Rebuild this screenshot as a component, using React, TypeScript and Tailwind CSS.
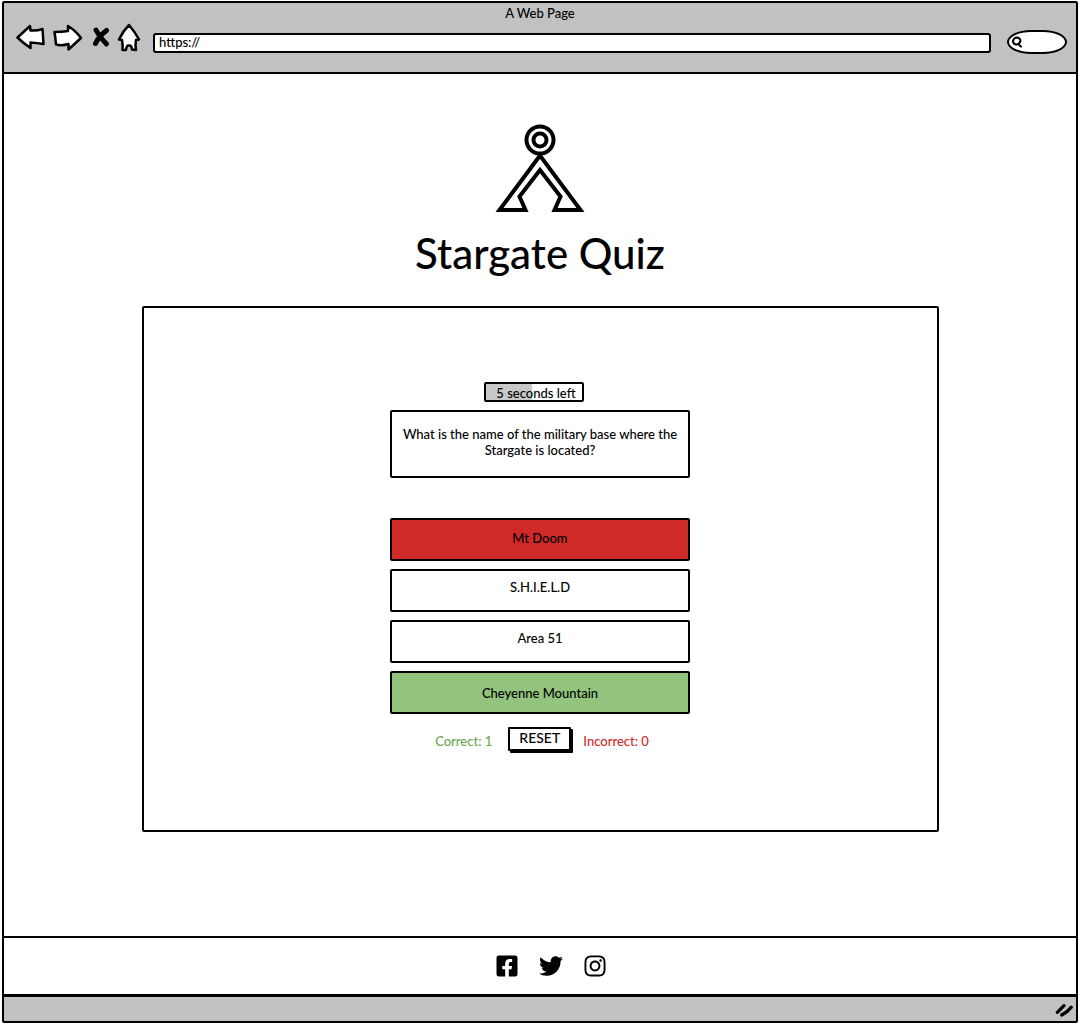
import { FaFacebookSquare, FaTwitter, FaInstagram } from "react-icons/fa";

const answers = [
  { label: "Mt Doom", tone: "bg-[#cf2a28] pb-1" },
  { label: "S.H.I.E.L.D", tone: "bg-white pb-2" },
  { label: "Area 51", tone: "bg-white pb-2" },
  { label: "Cheyenne Mountain", tone: "bg-[#93c47d]" },
];

function BrowserBar() {
  return (
    <header className="flex h-[71px] flex-col border-b-2 border-black bg-[#c1c1c1]">
      <p className="mt-0.5 text-center text-[13px] leading-4">A Web Page</p>
      <div className="flex items-start pl-[11px] pr-[9px]">
        <nav aria-label="Browser" className="flex">
          <button aria-label="Back" className="h-8 w-[30px]">
            <svg viewBox="0 0 30 32" className="h-8 w-[30px] fill-white stroke-black stroke-[2.5]" strokeLinejoin="round">
              <path d="M2.500 16.500 L15 5 L15.500 9.500 Q22 10 27.500 8 Q28 15 28.500 23 Q22 22 15.500 21.500 L15.500 27 Q8 22 2.500 16.500Z" />
            </svg>
          </button>
          <button aria-label="Forward" className="ml-2 h-8 w-[30px]">
            <svg viewBox="0 0 30 32" className="h-8 w-[30px] fill-white stroke-black stroke-[2.5]" strokeLinejoin="round">
              <path d="M1.500 11 Q9 11 15 10 L15 5 Q23 10 28 17 L15.500 28.500 L15.500 23 Q9 25 3 23.500 Q2.500 17 1.500 11Z" />
            </svg>
          </button>
          <button aria-label="Stop" className="ml-2 h-8 w-5">
            <svg viewBox="0 0 20 32" className="h-8 w-5 fill-none stroke-black stroke-[5]" strokeLinecap="round">
              <path d="M5 9 Q8 15 15.500 23 M15.500 9.500 Q8 15 4.500 22.500" />
            </svg>
          </button>
          <button aria-label="Home" className="ml-1.5 h-8 w-6">
            <svg viewBox="0 0 24 32" className="h-8 w-6 fill-white stroke-black stroke-[2.5]" strokeLinejoin="round">
              <path d="M12 4 Q18 11 22 18.500 L19 19 Q18 24 19 29 L15 28.500 Q14.500 24 12 24.500 Q9.500 24 9 29 L5.500 29 Q6 24 5 19 L2 18.500 Q6 10 12 4Z" />
            </svg>
          </button>
        </nav>
        <input
          aria-label="Address"
          defaultValue="https://"
          className="ml-3 mt-3 h-5 min-w-0 flex-1 rounded-[3px] border-2 border-black bg-white px-1 pb-0.5 text-[13px] leading-4 outline-none"
        />
        <label className="ml-4 mt-[9px] flex h-6 w-[60px] items-center rounded-[24px/12px] border-2 border-black bg-white pl-0.5">
          <svg viewBox="0 0 12 12" className="size-3 shrink-0 fill-none stroke-black stroke-2" strokeLinecap="round">
            <path d="M5.500 1.500 Q9 1.500 9.500 5 Q8.500 8.500 5 8.500 Q2 8 2 5 Q2.500 2 5.500 1.500Z M7 8 L10 10.500" />
          </svg>
          <input aria-label="Search" className="min-w-0 flex-1 bg-transparent outline-none" />
        </label>
      </div>
    </header>
  );
}

function Emblem() {
  return (
    <svg viewBox="0 0 90 90" className="size-[90px] fill-none stroke-black stroke-[4]" aria-label="Stargate emblem" role="img">
      <circle cx="45" cy="17" r="13.500" />
      <circle cx="45" cy="17" r="6.500" />
      <path d="M45 32.500 L4.500 87 L30.500 87 L24.500 73.500 L45 47 L65.500 73.500 L59.500 87 L85.500 87Z" />
    </svg>
  );
}

export default function App() {
  return (
    <div className="flex min-h-screen bg-white p-px font-['Lato',sans-serif] font-medium text-black">
      <div className="mx-px flex flex-1 flex-col rounded-[2px] border-2 border-black">
        <BrowserBar />
        <main className="flex flex-1 flex-col items-center pt-[49px]">
          <Emblem />
          <h1 className="mt-3.5 text-[42px] leading-[52px]">Stargate Quiz</h1>
          <section className="mt-[27px] flex w-full max-w-[797px] flex-col items-center rounded-[2px] border-2 border-black pb-[79px] pt-[74px]">
            <div className="relative mr-3 flex h-5 w-[100px] rounded-[2px] border-2 border-black bg-white">
              <div className="w-[48%] bg-[#c8c8c8]" />
              <span role="timer" className="absolute inset-0 whitespace-nowrap pl-1 text-center text-[13px] leading-[18px]">
                5 seconds left
              </span>
            </div>
            <p className="mt-2 h-[68px] w-[300px] rounded-[2px] border-2 border-black pt-3.5 text-center text-[13px] leading-4">
              What is the name of the military base where the Stargate is located?
            </p>
            <div className="mt-10 flex w-[300px] flex-col gap-2">
              {answers.map((a) => (
                <button
                  key={a.label}
                  className={`h-[43px] rounded-[2px] border-2 border-black text-[13px] leading-4 ${a.tone}`}
                >
                  {a.label}
                </button>
              ))}
            </div>
            <div className="mt-[13px] flex items-center pl-1 text-[13px] leading-4">
              <span className="pt-1 text-[#6aa84f]">Correct: 1</span>
              <button className="ml-4 mr-3 h-6 w-[63px] rounded-[1px] border-2 border-black bg-white pb-0.5 text-[14px] shadow-[2px_2px_0_#000]">
                RESET
              </button>
              <span className="pt-1 text-[#cf2a28]">Incorrect: 0</span>
            </div>
          </section>
        </main>
        <footer className="flex h-[58px] items-center justify-center gap-5 border-t-2 border-black pl-[22px]">
          <a href="#facebook" aria-label="Facebook">
            <FaFacebookSquare className="size-6" />
          </a>
          <a href="#twitter" aria-label="Twitter">
            <FaTwitter className="size-6" />
          </a>
          <a href="#instagram" aria-label="Instagram">
            <FaInstagram className="size-6" />
          </a>
        </footer>
        <div className="flex h-[27px] items-center justify-end border-t-[3px] border-black bg-[#c1c1c1] pr-0.5">
          <svg viewBox="0 0 18 14" className="h-4 w-5 fill-none stroke-black stroke-3" strokeLinecap="round">
            <path d="M3 10 L9 4 M7 12.500 Q12 10 15.500 5.500" />
          </svg>
        </div>
      </div>
    </div>
  );
}
